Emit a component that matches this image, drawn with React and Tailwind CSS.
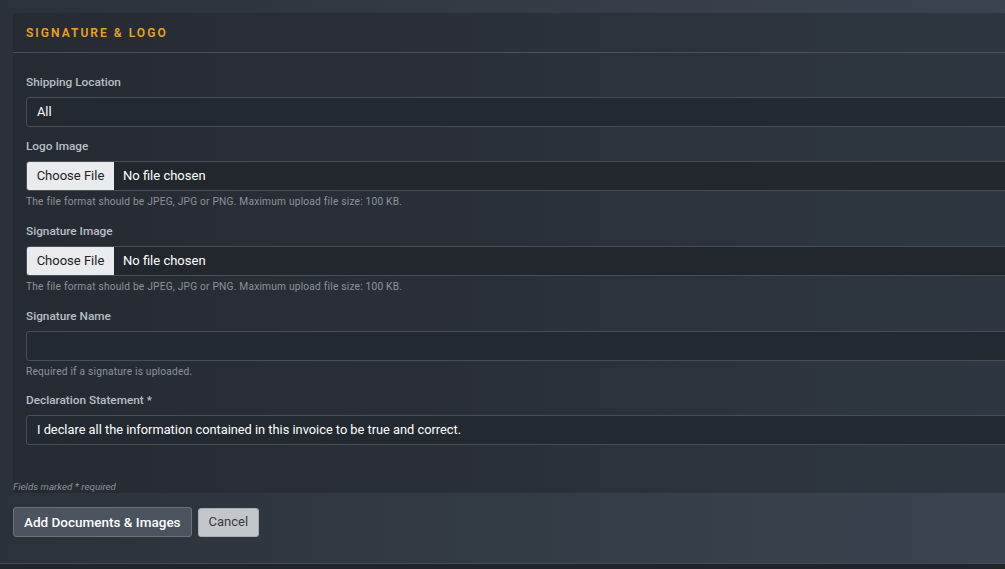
import React from 'react';

const helpText = 'The file format should be JPEG, JPG or PNG. Maximum upload file size: 100 KB.';

const Label = ({ children }) => (
  <div className="text-[11.8px] leading-[14px] font-medium text-[#b9bfc7] mb-[8px]">{children}</div>
);

const Help = ({ children }) => (
  <div className="text-[10.2px] leading-[14px] text-[#8d939b] mt-[4px] tracking-[0.02em]">{children}</div>
);

const FileField = () => (
  <div className="h-[30px] flex items-stretch border border-[#474e57] rounded-[3px] bg-[#22272e] overflow-hidden">
    <div className="w-[87px] bg-[#e9ebee] text-[#222] text-[13px] flex items-center justify-center">Choose File</div>
    <div className="pl-[9px] text-white text-[13px] flex items-center">No file chosen</div>
  </div>
);

const TextField = ({ value }) => (
  <div className="h-[30px] flex items-center px-[10px] border border-[#474e57] rounded-[3px] bg-[#232930] text-[12.8px] text-white">
    {value}
  </div>
);

export default function App() {
  return (
    <div
      className="h-[569px] w-[1005px] overflow-hidden flex flex-col bg-gradient-to-r from-[#2b3139] via-[#333b45] to-[#3a4450]"
      style={{ fontFamily: 'Roboto, "Liberation Sans", sans-serif' }}
    >
      <div className="pt-[13px] pl-[13px]">
        <div className="w-[1010px] bg-gradient-to-r from-[#262b33] via-[#2a3039] to-[#2e3741]">
          <div className="h-[40px] flex items-center pl-[13px] border-b border-[#4b525b]">
            <span className="text-[12px] font-semibold tracking-[0.17em] text-[#eea21c]">SIGNATURE &amp; LOGO</span>
          </div>
          <div className="pl-[13px] pt-[22px]">
            <Label>Shipping Location</Label>
            <TextField value="All" />
            <div className="h-[12px]" />
            <Label>Logo Image</Label>
            <FileField />
            <Help>{helpText}</Help>
            <div className="h-[15px]" />
            <Label>Signature Image</Label>
            <FileField />
            <Help>{helpText}</Help>
            <div className="h-[15px]" />
            <Label>Signature Name</Label>
            <TextField value="" />
            <Help>Required if a signature is uploaded.</Help>
            <div className="h-[14px]" />
            <Label>Declaration Statement *</Label>
            <TextField value="I declare all the information contained in this invoice to be true and correct." />
          </div>
          <div className="pt-[35px] text-[9.8px] leading-[13px] italic text-[#8a9098]">Fields marked * required</div>
        </div>
      </div>
      <div className="pl-[13px] pt-[14px] flex gap-[6px]">
        <button className="h-[30px] px-[10px] bg-[#4a535e] border border-[#6b737d] rounded-[3px] text-[13.5px] font-medium text-white">
          Add Documents &amp; Images
        </button>
        <button className="h-[29px] mt-[0.5px] px-[10px] bg-[#c3c7cb] border border-[#a9aeb3] rounded-[3px] text-[13px] text-[#353a40]">
          Cancel
        </button>
      </div>
      <div className="flex-1" />
      <div className="h-[6px] bg-[#212429] border-t border-[#454c55]" />
    </div>
  );
}
